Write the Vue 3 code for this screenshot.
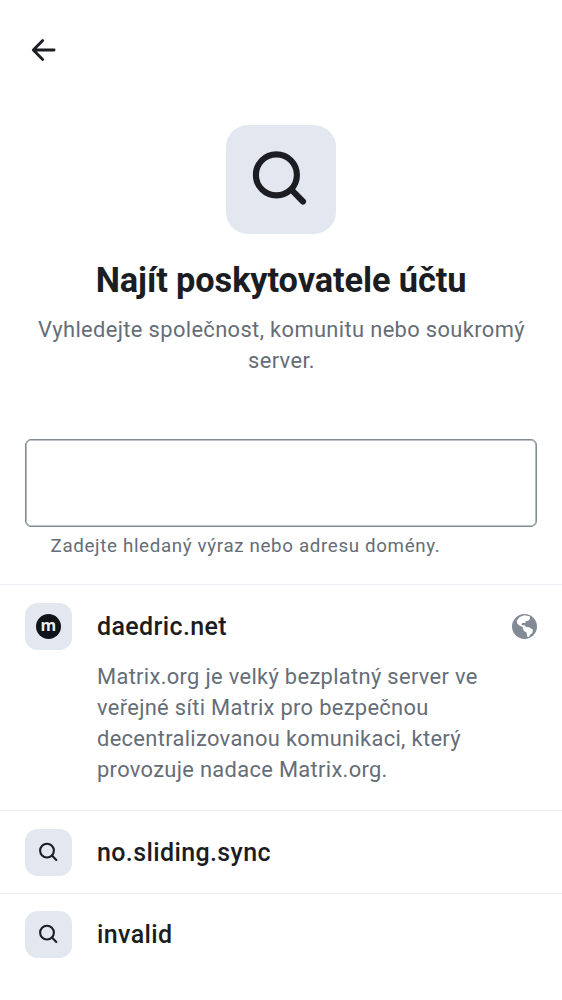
<script setup>
const others = ['no.sliding.sync', 'invalid']
</script>

<template>
  <main class="screen">
    <header class="bar">
      <svg class="back" viewBox="0 0 38 38" aria-label="Zpět">
        <path d="M30.1 19H9.6M18.7 9.5L9.3 19L18.7 28.5" />
      </svg>
    </header>

    <section class="hero">
      <div class="hero-tile">
        <svg class="hero-icon" viewBox="0 0 110 110">
          <circle cx="50.4" cy="49.9" r="20.5" />
          <path d="M65.3 64.7L77 76.5" />
        </svg>
      </div>
      <h1>Najít poskytovatele účtu</h1>
      <p>Vyhledejte společnost, komunitu nebo soukromý server.</p>
    </section>

    <section class="search">
      <input class="field" type="text" aria-label="Hledat" />
      <p class="hint">Zadejte hledaný výraz nebo adresu domény.</p>
    </section>

    <section class="item first">
      <div class="row">
        <div class="tile"><span class="logo">m</span></div>
        <span class="name">daedric.net</span>
        <svg class="globe" viewBox="0 0 75 75">
          <circle cx="37.5" cy="37.5" r="37.5" fill="#818a95" />
          <path fill="#fff" d="M23 9L37 4L53 7L54 14L49 20L41 22L40 27L31 27L28 31L31 34L38 34L42 39L52 40L59 45L63 47L61 57L54 62L51 69L46 68L43 55L36 51L32 43L33 39L24 36L16 29L14 20Z" />
        </svg>
      </div>
      <p class="desc">Matrix.org je velký bezplatný server ve veřejné síti Matrix pro bezpečnou decentralizovanou komunikaci, který provozuje nadace Matrix.org.</p>
    </section>

    <section v-for="name in others" :key="name" class="item">
      <div class="row">
        <div class="tile">
          <svg class="lens" viewBox="0 0 47 47">
            <circle cx="22" cy="21.6" r="6.9" />
            <path d="M27 26.6L31.3 30.9" />
          </svg>
        </div>
        <span class="name">{{ name }}</span>
      </div>
    </section>
  </main>
</template>

<style>
body {
  margin: 0;
  background: #fff;
}
</style>

<style scoped>
.screen {
  width: 562px;
  height: 1000px;
  overflow: hidden;
  background: #fff;
  color: #1b1d22;
  font-family: Roboto, "Noto Sans", sans-serif;
}
h1, p {
  margin: 0;
}
svg {
  display: block;
  flex: none;
}
.bar {
  height: 100px;
  padding-left: 24px;
  display: flex;
  align-items: center;
}
.back {
  width: 38px;
  height: 38px;
  fill: none;
  stroke: #1b1d22;
  stroke-width: 2.8;
  stroke-linecap: round;
  stroke-linejoin: round;
}
.hero {
  display: flex;
  flex-direction: column;
  align-items: center;
  padding-top: 25px;
  text-align: center;
}
.hero-tile {
  width: 109.4px;
  height: 109.4px;
  border-radius: 22px;
  background: #e3e8f0;
}
.hero-icon {
  width: 110px;
  height: 110px;
  fill: none;
  stroke: #1b1d22;
  stroke-width: 6.1;
  stroke-linecap: round;
}
h1 {
  margin-top: 23.6px;
  font-size: 34.35px;
  line-height: 44px;
  font-weight: 700;
  letter-spacing: -0.1px;
  white-space: nowrap;
}
.hero p {
  width: 512px;
  margin-top: 12px;
  padding-left: 1px;
  font-size: 21.86px;
  line-height: 31.2px;
  letter-spacing: 0.37px;
  color: #656d77;
}
.search {
  height: 145px;
  padding: 63px 25px 0;
}
.field {
  display: block;
  box-sizing: border-box;
  width: 512px;
  height: 87.5px;
  border: 1px solid #818a95;
  border-radius: 6px;
  box-shadow: inset 0 0 0 0.6px #818a95;
  background: #fff;
  outline: none;
}
.hint {
  margin: 7.5px 0 0 25.6px;
  font-size: 18.73px;
  line-height: 25px;
  letter-spacing: 0.66px;
  color: #656d77;
}
.item {
  border-top: 1px solid #ebeef2;
  padding: 17.5px 25px;
  height: 46.5px;
}
.item.first {
  height: 190px;
}
.row {
  display: flex;
  align-items: center;
}
.tile {
  width: 46.8px;
  height: 46.8px;
  flex: none;
  border-radius: 12.5px;
  background: #e3e8f0;
  display: flex;
  align-items: center;
  justify-content: center;
}
.lens {
  width: 47px;
  height: 47px;
  fill: none;
  stroke: #1b1d22;
  stroke-width: 2.1;
  stroke-linecap: round;
}
.logo {
  width: 25px;
  height: 25px;
  border-radius: 50%;
  background: #101317;
  color: #e8edf3;
  font: 700 16px/23px "Open Sans", sans-serif;
  text-align: center;
}
.name {
  flex: 1;
  margin-left: 25.2px;
  padding-top: 1px;
  font-size: 25px;
  line-height: 38px;
  font-weight: 500;
  letter-spacing: 0.38px;
}
.globe {
  width: 25px;
  height: 25px;
}
.desc {
  width: 400px;
  margin: 11px 0 0 72px;
  font-size: 21.86px;
  line-height: 31.2px;
  letter-spacing: 0.33px;
  color: #656d77;
}
</style>
